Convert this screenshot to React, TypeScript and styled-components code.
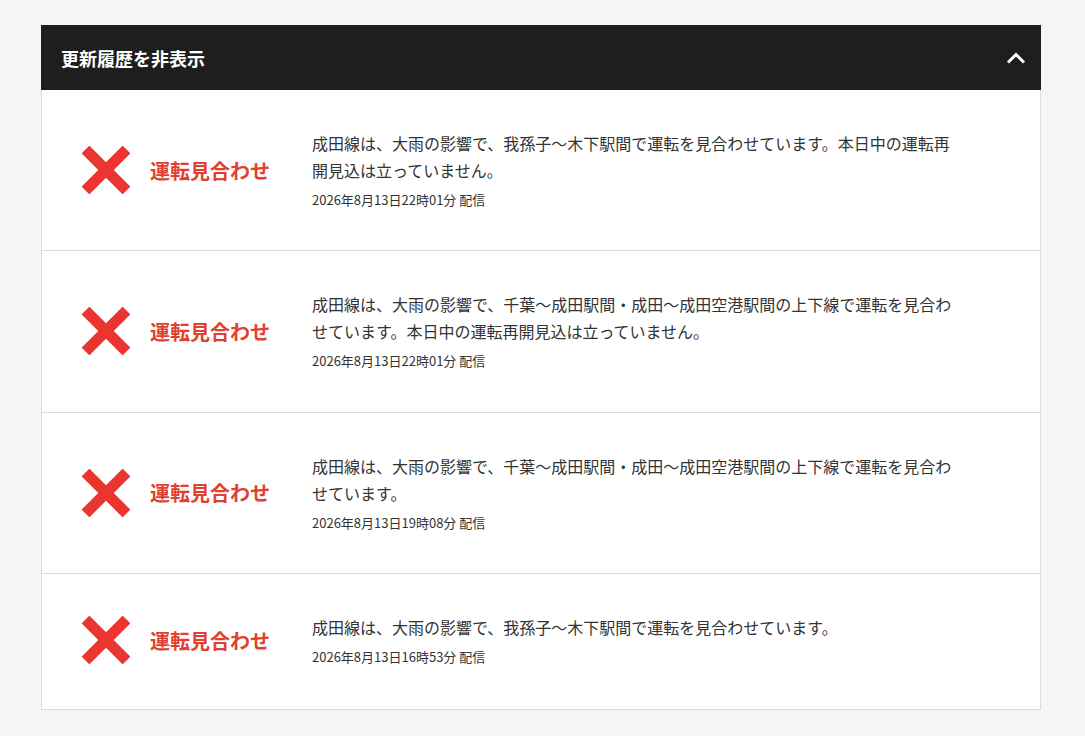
import React from 'react';
import styled, { createGlobalStyle } from 'styled-components';

interface Notice {
  message: string;
  postedAt: string;
}

const notices: Notice[] = [
  {
    message:
      '成田線は、大雨の影響で、我孫子〜木下駅間で運転を見合わせています。本日中の運転再開見込は立っていません。',
    postedAt: '2026年8月13日22時01分 配信',
  },
  {
    message:
      '成田線は、大雨の影響で、千葉〜成田駅間・成田〜成田空港駅間の上下線で運転を見合わせています。本日中の運転再開見込は立っていません。',
    postedAt: '2026年8月13日22時01分 配信',
  },
  {
    message:
      '成田線は、大雨の影響で、千葉〜成田駅間・成田〜成田空港駅間の上下線で運転を見合わせています。',
    postedAt: '2026年8月13日19時08分 配信',
  },
  {
    message: '成田線は、大雨の影響で、我孫子〜木下駅間で運転を見合わせています。',
    postedAt: '2026年8月13日16時53分 配信',
  },
];

const GlobalStyle = createGlobalStyle`
  body {
    margin: 0;
    background: #f5f5f5;
    font-family: 'Noto Sans CJK JP', 'Noto Sans', sans-serif;
    color: #333;
  }
`;

const Page = styled.main`
  padding: 25px 44px 26px 41px;
`;

const Panel = styled.section`
  width: 1000px;
`;

const Header = styled.button`
  display: flex;
  align-items: center;
  justify-content: space-between;
  width: 100%;
  height: 65px;
  padding: 0 14px 0 20px;
  background: #1e1e1e;
  color: #fff;
  border: none;
  font-family: inherit;
  font-size: 18px;
  font-weight: 700;
  cursor: pointer;
`;

const List = styled.ul`
  list-style: none;
  margin: 0;
  padding: 0;
  background: #fff;
  border: 1px solid #dcdcdc;
  border-top: none;
`;

const Row = styled.li`
  display: flex;
  align-items: center;
  padding: 40px 0 40.3px 40px;

  & + & {
    border-top: 1px solid #dcdcdc;
  }

  &:last-child {
    padding-bottom: 42px;
  }
`;

const Status = styled.div`
  display: flex;
  align-items: center;
  gap: 20px;
  width: 230px;
  flex-shrink: 0;
`;

const StatusLabel = styled.span`
  color: #e2402f;
  font-size: 20px;
  font-weight: 700;
`;

const Body = styled.div`
  width: 645px;
`;

const Message = styled.p`
  margin: 0;
  font-size: 16px;
  line-height: 27px;
`;

const Posted = styled.p`
  margin: 6px 0 0;
  font-size: 13px;
  line-height: 20px;
`;

const StopIcon: React.FC = () => (
  <svg width="48" height="48" viewBox="0 0 48 48" aria-hidden="true">
    <g fill="#ea3530">
      <rect x="-5" y="18.5" width="58" height="11" transform="rotate(45 24 24)" />
      <rect x="-5" y="18.5" width="58" height="11" transform="rotate(-45 24 24)" />
    </g>
  </svg>
);

const ChevronUp: React.FC = () => (
  <svg width="22" height="14" viewBox="0 0 22 14" aria-hidden="true">
    <path d="M3 11.5 L11 3.5 L19 11.5" fill="none" stroke="#fff" strokeWidth="3" />
  </svg>
);

const App: React.FC = () => (
  <>
    <GlobalStyle />
    <Page>
      <Panel>
        <Header>
          <span>更新履歴を非表示</span>
          <ChevronUp />
        </Header>
        <List>
          {notices.map((n, i) => (
            <Row key={i}>
              <Status>
                <StopIcon />
                <StatusLabel>運転見合わせ</StatusLabel>
              </Status>
              <Body>
                <Message>{n.message}</Message>
                <Posted>{n.postedAt}</Posted>
              </Body>
            </Row>
          ))}
        </List>
      </Panel>
    </Page>
  </>
);

export default App;
